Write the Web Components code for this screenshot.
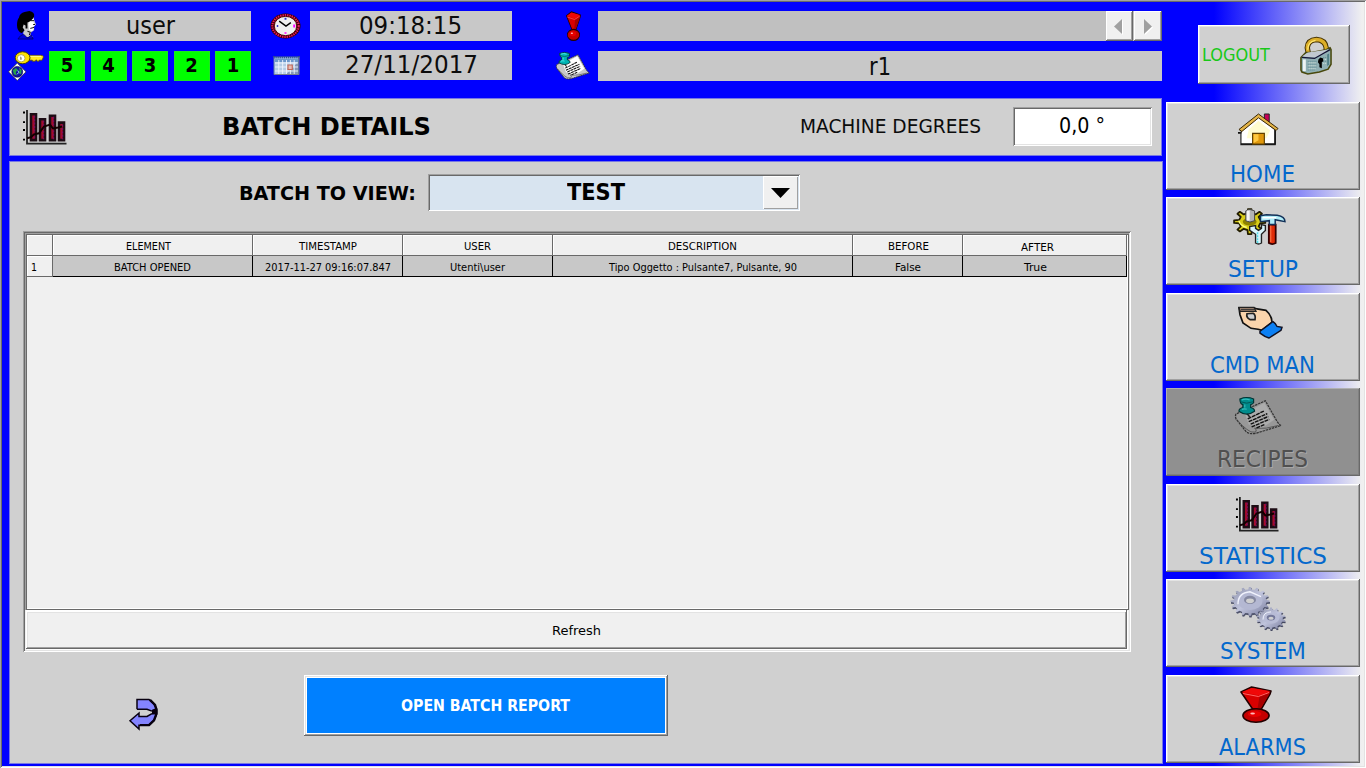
<!DOCTYPE html>
<html lang="en">
<head>
<meta charset="utf-8">
<title>Batch details</title>
<style>
  html, body { margin: 0; height: 100%; }
  body { font-family: "DejaVu Sans Condensed", "DejaVu Sans", sans-serif; color: #000; overflow: hidden; background: #fff; }
</style>
</head>
<body>
<hmi-app></hmi-app>
<script>
const define = (name, html, setup) => {
  const tpl = document.createElement('template');
  tpl.innerHTML = html;
  customElements.define(name, class extends HTMLElement {
    constructor() {
      super();
      this.attachShadow({ mode: 'open' }).append(tpl.content.cloneNode(true));
    }
    connectedCallback() { if (setup) setup.call(this, this.shadowRoot); }
  });
};

/* A label squeezed or stretched to an exact width, given in px by "w". */
define('fit-text', `
  <style>
    :host { display: inline-block; white-space: nowrap; }
    span { display: inline-block; transform-origin: 0 50%; }
  </style><span><slot></slot></span>`, function (root) {
  const w = parseFloat(this.getAttribute('w'));
  const s = root.querySelector('span');
  const natural = s.getBoundingClientRect().width;
  this.style.width = w + 'px';
  if (natural) s.style.transform = `scaleX(${w / natural})`;
});

const gear = (cx, cy, rx, ry, n, k) => {
  let p = [];
  for (let i = 0; i < n; i++) {
    for (const [o, f] of [[-.26, k], [-.14, 1], [.14, 1], [.26, k]]) {
      const a = (i + o) / n * 2 * Math.PI;
      p.push((cx + Math.sin(a) * rx * f).toFixed(1) + ' ' + (cy - Math.cos(a) * ry * f).toFixed(1));
    }
  }
  return 'M' + p.join('L') + 'Z';
};

const note = (paper, hi, pin) => `
  <path d="M7 15L1 18Q0 20 1 23L11 36Q15 40 22 38L47 30Q44 28 42 24L31 4L18 10Z" fill="${paper}" stroke="#333" stroke-width="1.300" stroke-dasharray="2.500 .8"/>
  <path d="M10 17L30 6L40 24L27 33L14 29Z" fill="${hi}"/>
  <path d="M3 25Q8 31 12 34Q16 38 21 37Q23 34 20 33Q32 34 44 30" fill="none" stroke="#555"/>
  <path d="M13 23L30 14.500M14 26L33 17.500M16 28.500L34 20.500M17 31.500L35 23.500M22 32.500L30 29" stroke="#111" stroke-width="1.500" stroke-dasharray="4 .8"/>
  <path d="M12 17L15 21" stroke="#222" stroke-width="1.500"/>
  <path d="M5 2Q12 -1 19 2V6Q18 7.500 16 8V11Q20 12 20 15Q12 21 4 15Q4 12 8 11V8Q5 7 5 2Z" fill="${pin}" stroke="#033" stroke-width="1.200"/>
  <path d="M5.500 5Q12 8 18.500 5" stroke="#055" fill="none"/>
  <path d="M7 3Q11 1.500 15 3M7 13Q10 12 12 13M10 8V11" stroke="${pin === '#008c8c' ? '#3bb' : '#5ee'}" stroke-width="1.200" fill="none"/>`;

const exclaim = `
  <path d="M1 6L12 1L32 5L31 8L22 23H13Z" fill="#d80000" stroke="#200" stroke-width="1.600" stroke-linejoin="round"/>
  <path d="M2 6L12 2L31 5L20 9.500Z" fill="#f00808"/><path d="M3 7.500L19 10.500L30 6.500" fill="none" stroke="#f66" stroke-width="1"/>
  <path d="M20 11L31 7L21 23H18Z" fill="#a80000"/>
  <ellipse cx="16.500" cy="29.500" rx="13.500" ry="6.800" fill="#c40000" stroke="#200" stroke-width="1.600"/>
  <ellipse cx="15" cy="28" rx="7" ry="3" fill="#e80000"/><ellipse cx="13" cy="27.400" rx="2.400" ry="1" fill="#fbb"/>`;

const icons = {
  user: ['0 0 20 30', `
    <path d="M9 2L17 4L18 9L20 14L18 16V20L15 22L14 25L17 27H6L7 20L3 14Z" fill="#ccc"/>
    <path d="M14 8H17.500V12L19 15L17 16L18 18L16 21L13 20L12 14Z" fill="#fff"/>
    <path d="M8 1Q3 2 2 7Q0 9 0 15Q0 21 5 23L8 20L6 17L7 14L9 15V18H11V12Q15 11 18 6Q19 1 13 0Z" fill="#000"/>
    <path d="M14 10H18M17 14H19M14 18L18 17M11 21L14 22L13 25" stroke="#000" fill="none"/>
    <path d="M1 29Q3 25 7 24L11 28L15 25L17 29Z" fill="#0000d8" stroke="#000060" stroke-width=".8"/>`],
  key: ['0 0 36 31', `
    <path d="M18 4.500H34L35.500 6L34 9.500H31V10.500H29L28 9L27 10.500H24V9.500H19Z" fill="#ffe820" stroke="#554400" stroke-width=".8"/>
    <path d="M19 5.500H33" stroke="#ffffa0"/>
    <ellipse cx="14" cy="7" rx="7.600" ry="6.200" fill="#ffe100" stroke="#443c00"/>
    <ellipse cx="12.500" cy="7.500" rx="4" ry="3.800" fill="#fff" stroke="#bbaa40"/><path d="M11.500 5.500L13 7V9H11.500Z" fill="#886"/>
    <path d="M8.500 12.500L17.500 21.500L8.500 30.500L-.5 21.500Z" fill="#fff" stroke="#222" stroke-width=".7"/>
    <circle cx="8.500" cy="21.500" r="5.600" fill="#1010a0" stroke="#000040" stroke-width=".6"/>
    <path d="M4 20L7 17.500L9 19L7 22L8 25L5 24ZM10 17L13 19.500L12.500 24L10 23L11 20Z" fill="#28a048"/>
    <path d="M9 20L10 22L8.500 24" fill="none" stroke="#9cf" stroke-width="1"/>`],
  clock: ['0 0 32 27', `
    <ellipse cx="16" cy="13.500" rx="15.500" ry="13" fill="#300"/>
    <ellipse cx="16" cy="13.500" rx="13.600" ry="11.300" fill="none" stroke="#e8185c" stroke-width="2.200" stroke-dasharray="1.500 .9"/>
    <ellipse cx="16" cy="13.500" rx="11.600" ry="10" fill="#f0f0f0" stroke="#500"/>
    <path d="M9.500 8.500L16.500 13.500L21.500 10" fill="none" stroke="#000" stroke-width="1.500"/>
    <path d="M15 5h2v2h-2ZM7 12.500h1.500v2H7Z" fill="#33c"/><path d="M24 12h2v3h-2ZM15 20h2v1.500h-2Z" fill="#f0f"/>`],
  calendar: ['0 0 28 20', `
    <path d="M1 1H26.500V18.500H1Z" fill="#b4cce6" stroke="#4c6ca4"/><path d="M1 0V1.500H27V0" fill="none" stroke="#2a4a90" stroke-width="2" stroke-dasharray="1 1"/>
    <path d="M2 2.500H26V6H2Z" fill="#6c98cc"/>
    <path d="M14 18L26 6V18Z" fill="#8498b8"/>
    <path d="M2 7H26M2 11H26M2 15H26M6 4V18M10 4V18M14 4V18M18 4V18M22 4V18" stroke="#f0f6ff" stroke-width=".9"/>
    <path d="M15.500 9H20V13.500H15.500Z" fill="#e4bcb4" stroke="#c06858" stroke-width="1.200"/>
    <path d="M1 18.500H27V1" fill="none" stroke="#787c90"/>`],
  exclaim: ['0 0 33 37', exclaim],
  note: ['0 0 48 40', note('#c8c8c8', '#fff', '#00b4b4')],
  noteDim: ['0 0 48 40', note('#989898', '#acacac', '#008c8c')],
  chart: ['0 0 45 37', `
    <path d="M5 1V35.500H44.500" fill="none" stroke="#222" stroke-width="1.800"/>
    <path d="M1 3.500h2M1 13.500h2M1 21.500h2M1 31.500h2" stroke="#000" stroke-width="2"/>
    <path d="M9 5.500H14V32H9ZM18 10.500H23V32H18ZM28 7H33V32H28ZM37 14H42V32H37Z" fill="#a80c2c" stroke="#1c0c14" stroke-width="2.600"/>
    <path d="M12.500 7V31M21.500 12V31M31.500 8V31M40.500 16V31" stroke="#780c60" stroke-width="1.400" stroke-dasharray="2 1.500"/>
    <path d="M5 30L9 29L12 26L17 25L22 18L28 16L31 20L36 19L40 18" fill="none" stroke="#100" stroke-width="2"/>`],
  lock: ['0 0 33 37', `
    <path d="M9 18L7.500 10Q8 2 17 1.500Q26 2 27 10V15" fill="none" stroke="#463200" stroke-width="5.500"/>
    <path d="M9 18L7.500 10Q8 2 17 1.500Q26 2 27 10V15" fill="none" stroke="#dcae28" stroke-width="3.500"/>
    <path d="M8 12Q8 4 16 2.500" fill="none" stroke="#ffe870" stroke-width="1.200"/>
    <path d="M1 20L6 15H12L27 12L31 10L32 12V27L29 32L20 35L8 37L2 35L1 33Z" fill="#90b0b4" stroke="#48480c" stroke-width="1.600"/>
    <path d="M2 19L8 15L27 12L30 11L26 16L15 20Z" fill="#c0c8d0"/>
    <path d="M2 20L15 21L31 12" fill="none" stroke="#113" stroke-width="1.300"/>
    <path d="M3 22H6V34H3Z" fill="#eef4f4"/><path d="M28 17L30 16V27L28 29Z" fill="#508088"/>
    <path d="M8 24H18M8 27H18M8 30H18M8 33H16M24 20H28M24 24H28" stroke="#5c8890" stroke-width="1" stroke-dasharray="1 1"/>
    <path d="M9 25.500H17M9 28.500H17M9 31.500H17M24 22H28M24 26H28" stroke="#d8e8e0" stroke-width="1" stroke-dasharray="1 1"/>
    <path d="M21 20L24 21V24L22.500 25V31L20 30V27L18.500 25L19 22Z" fill="#000"/>`],
  home: ['0 0 43 34', `
    <path d="M28 1H33V11L28 7Z" fill="#c80058" stroke="#222"/>
    <path d="M5 16L22 3L39 17V32.500H4V22Z" fill="#fff" stroke="#333" stroke-width="1.300"/>
    <path d="M12 17L22 8L34 18L30 26H10Z" fill="#fffcd0"/>
    <path d="M1 20.500H4M39 17V32H4" fill="none" stroke="#111" stroke-width="1.600"/>
    <path d="M2 17L22 1L42 16L40 18L22 5L5 19Z" fill="#e4b448" stroke="#332200" stroke-width="1"/>
    <path d="M16 21H28V32H16Z" fill="#e0980c" stroke="#604000" stroke-width="1.200"/><path d="M17 22H22V28L17 31Z" fill="#ffc840"/>`],
  setup: ['0 0 54 38', `
    <path d="${gear(17, 14, 16, 13, 8, .68)}" fill="#d8cc18" stroke="#221c00" stroke-width="1.800" stroke-linejoin="round"/>
    <ellipse cx="17" cy="14" rx="7" ry="4" fill="#8c8000"/><path d="M6 13Q7 18 14 20" fill="none" stroke="#ffff80" stroke-width="1.500"/>
    <path d="M13 3Q17 0 22 3V13Q17 16 13 13Z" fill="#b4b4b4" stroke="#444"/><path d="M15.500 2.500V13" stroke="#f4f4f4" stroke-width="3"/>
    <path d="M17 19L17 23L23 27V36Q26 38 29 36V27L33 23V18L29 17V21L26 23L23 21V18Z" fill="#d8f4fa" stroke="#222" stroke-width="1.400"/>
    <path d="M25 25V36" stroke="#50dce8" stroke-width="1.500" stroke-dasharray="2 1"/>
    <path d="M36.500 17H43.500V36Q40 38 36.500 36Z" fill="#e02c08" stroke="#300" stroke-width="1.800"/><path d="M38.500 18V35" stroke="#ff8050"/>
    <path d="M28 8L34 7L45 7.500Q53 9 53 14L43 12V17H37V13L28 14Z" fill="#b0ecf8" stroke="#113058" stroke-width="1.500"/><path d="M30 10H44" stroke="#fff" stroke-width="1.500"/>`],
  hand: ['0 0 45 34', `
    <path d="M1 2H16L19 3L28 4.500Q34 10 34 17L24 25L20 24L13 23L5 17.500L2 9Z" fill="#fad4ac" stroke="#111" stroke-width="1.700"/>
    <path d="M1 1.500H16L18 5.500H2Z" fill="#a08470" stroke="#222" stroke-width="1.300"/><path d="M3 3.500H17" stroke="#333" stroke-width="1"/>
    <path d="M9 8L15 7.500Q18 9 17 14H12Q8 12 9 8Z" fill="#d0d0d0" stroke="#222" stroke-width="1.700"/>
    <path d="M22 26L35 16Q38 18 39 21L44 22L43 25L31 33Q27 32 22 28Z" fill="#0c80f4" stroke="#112" stroke-width="1.500"/>`],
  gears: ['0 0 56 46', `
    <defs><linearGradient id="g" x1="0" y1="0" x2="1" y2="1"><stop offset="0" stop-color="#9094ac"/><stop offset=".5" stop-color="#c0c4dc"/><stop offset="1" stop-color="#74789a"/></linearGradient></defs>
    <path d="${gear(20, 15.500, 19.500, 15.500, 16, .84)}" fill="#50546c" transform="translate(.5 1)"/>
    <path d="${gear(20, 15, 19.500, 15, 16, .84)}" fill="url(#g)"/>
    <ellipse cx="20" cy="14.500" rx="12.500" ry="9.500" fill="#b4b8d2"/><path d="M8 18Q8 6 20 5L31 10" fill="none" stroke="#f0f2fc" stroke-width="1.400"/>
    <ellipse cx="20" cy="13.500" rx="6" ry="4.300" fill="#8488a0"/><ellipse cx="20" cy="14.500" rx="4" ry="2.600" fill="#d0d0d0"/>
    <path d="${gear(41, 33.500, 14.500, 11.500, 14, .82)}" fill="#444860" transform="translate(.5 1)"/>
    <path d="${gear(41, 33, 14.500, 11.500, 14, .82)}" fill="url(#g)"/>
    <ellipse cx="41" cy="32" rx="8.500" ry="6.400" fill="#b8bcd6"/><path d="M33 34Q33 26 41 26" fill="none" stroke="#f0f2fc"/>
    <ellipse cx="41" cy="32" rx="4.200" ry="3" fill="#74789a"/><ellipse cx="41" cy="32.600" rx="2.600" ry="1.600" fill="#d0d0d0"/>`],
  back: ['0 0 29 34', `
    <path d="M8 1.500H20L25 6.500L27.500 11V17L25 23L20 28H10V32L1 23.500L10 15.500V19H18L23 16V13L18 11.500H8Z" fill="#8484ff"/>
    <path d="M9 12.500H16L23 14L20 18H16Z" fill="#d0d0d0"/>
    <path d="M8 11.500V1.500H20L25 6.500L27.500 11V17L25 23L20 28H10V32L1 23.500L10 15.500V19H18L23 16" fill="none" stroke="#080010" stroke-width="1.500"/>
    <path d="M21 2L26 7L27.500 12V16L25 23L20 28H11" fill="none" stroke="#080010" stroke-width="2.400"/>
    <path d="M8 11.500H18L23 13.500" fill="none" stroke="#080010" stroke-width="1.600"/>
    <path d="M23 12L28 10V17L23 17Z" fill="#080010"/>`]
};

define('hmi-icon', `
  <style>:host { display: block; flex: none; } svg { display: block; overflow: visible; width: 100%; height: 100%; }</style>
  <svg preserveAspectRatio="none"></svg>`, function (root) {
  const [box, art] = icons[this.getAttribute('name')];
  const svg = root.querySelector('svg');
  svg.setAttribute('viewBox', box);
  svg.innerHTML = art;
  this.style.width = this.getAttribute('w') + 'px';
  this.style.height = this.getAttribute('h') + 'px';
});

define('status-field', `
  <style>:host { display: flex; align-items: center; justify-content: center; background: #c8c8c8; font-size: 24px; line-height: 28px; color: #0c0c0c; }</style>
  <slot></slot>`);

define('level-keys', `
  <style>
    :host { display: grid; grid-template-columns: 36px 36px 36px 36px 36px; justify-content: space-between; margin-right: 1px; font: bold 20px/29px "DejaVu Sans Condensed", sans-serif; }
    b { background: #0f0; text-align: center; box-shadow: inset 0 0 0 1px #1ee61e; }
  </style>
  <b>5</b><b>4</b><b>3</b><b>2</b><b>1</b>`);

define('scroll-key', `
  <style>
    :host { display: grid; place-items: center; background: #f0f0f0; box-sizing: border-box; padding: 0 2px 0 0;
      box-shadow: inset -1px -1px #696969, inset 1px 1px #fff, inset -2px -2px #a0a0a0; }
    svg { display: block; overflow: visible; }
  </style>
  <svg width="9" height="15"><path fill="#fff" transform="translate(1 1)"/><path fill="#a0a0a0"/></svg>`, function (root) {
  const d = this.hasAttribute('next') ? 'M1 0V15L9 7.500Z' : 'M8 0V15L0 7.500Z';
  root.querySelectorAll('path').forEach(p => p.setAttribute('d', d));
});

define('status-bar', `
  <style>
    :host { display: grid; height: 87px; box-sizing: content-box; padding: 11px 0 0 9px;
      grid-template-columns: 40px 203px 58px 202px 86px 564px; grid-template-rows: 30px 30px; row-gap: 10px; }
    .ic { display: flex; align-items: flex-start; }
    .message { display: grid; grid-template-columns: 1fr 27px 28px; column-gap: 1px; background: #c0c0c0; }
    status-field.user { margin-right: 1px; }
    status-field.time { padding-right: 1px; }
    status-field.date { margin: -1px 0 1px; }
    status-field.recipe { padding-top: 1px; }
  </style>
  <div class="ic"><hmi-icon name="user" w="19" h="29" style="margin-left:8px"></hmi-icon></div>
  <status-field class="user"><fit-text w="49">user</fit-text></status-field>
  <div class="ic"><hmi-icon name="clock" w="31" h="26" style="margin:2px 0 0 18px"></hmi-icon></div>
  <status-field class="time"><fit-text w="103">09:18:15</fit-text></status-field>
  <div class="ic"><hmi-icon name="exclaim" w="15" h="30" style="margin-left:54px"></hmi-icon></div>
  <div class="message"><span></span><scroll-key></scroll-key><scroll-key next></scroll-key></div>
  <div class="ic"><hmi-icon name="key" w="35" h="30"></hmi-icon></div>
  <level-keys></level-keys>
  <div class="ic"><hmi-icon name="calendar" w="27" h="20" style="margin:5px 0 0 21px"></hmi-icon></div>
  <status-field class="date"><fit-text w="133">27/11/2017</fit-text></status-field>
  <div class="ic"><hmi-icon name="note" w="34" h="28" style="margin:1px 0 0 44px"></hmi-icon></div>
  <status-field class="recipe"><fit-text w="22">r1</fit-text></status-field>`);

define('page-header', `
  <style>
    :host { display: flex; align-items: center; box-sizing: border-box; height: 58px; margin: 0 1px 0 9px; padding-bottom: 2px; background: #d0d0d0; border: 1px solid #7878e4; }
    hmi-icon { margin: 2px 0 0 12px; }
    .title { margin-left: 155px; font-weight: bold; font-size: 25px; }
    .label { margin-left: auto; font-size: 20px; color: #0c0c0c; }
    .value { width: 139px; height: 39px; margin: 0 9px 0 32px; box-sizing: border-box; display: grid; place-items: center; background: #fff; font-size: 21px; padding-right: 2px;
      box-shadow: inset 1px 1px #a0a0a0, inset -1px -1px #fff, inset 2px 2px #696969, inset -2px -2px #e3e3e3; }
  </style>
  <hmi-icon name="chart" w="45" h="36"></hmi-icon>
  <fit-text class="title" w="209">BATCH DETAILS</fit-text>
  <fit-text class="label" w="181">MACHINE DEGREES</fit-text>
  <div class="value"><fit-text w="46">0,0 °</fit-text></div>`);

define('batch-select', `
  <style>
    :host { display: flex; box-sizing: border-box; width: 372px; height: 37px; padding: 2px; background: #d8e4f0;
      box-shadow: inset 1px 1px #a0a0a0, inset -1px -1px #fff, inset 2px 2px #696969; }
    .v { flex: 1; display: grid; place-items: center; font-weight: bold; font-size: 23px; padding: 0 2px 2px 0; line-height: 28px; }
    .b { width: 35px; display: grid; place-items: center; background: #f0f0f0; box-shadow: inset 1px 1px #fff, inset -1px -1px #a0a0a0; }
  </style>
  <div class="v"><fit-text w="58">TEST</fit-text></div>
  <div class="b"><svg width="19" height="10"><path d="M0 0H19L9.500 10Z"/></svg></div>`);

define('log-table', `
  <style>
    :host { display: flex; flex-direction: column; box-sizing: border-box; width: 1108px; height: 421px; padding: 2px; background: #f0f0f0; font-size: 11px; line-height: 13px;
      box-shadow: inset 1px 1px #a0a0a0, inset -1px -1px #fff, inset 2px 2px #696969, inset -2px -2px #e3e3e3; }
    .view { height: 377px; width: 1104px; padding: 2px; box-sizing: border-box; box-shadow: inset 1px 1px #a0a0a0, inset -1px -1px #696969, inset 2px 2px #696969, inset -2px -2px #fff; }
    .grid { display: grid; grid-template-columns: 26px 200px 150px 150px 300px 110px 164px; grid-template-rows: 21px 21px; }
    .grid > div { display: grid; place-items: center; box-sizing: border-box; border-right: 1px solid #696969; border-bottom: 1px solid #696969; }
    .h { box-shadow: inset 1px 1px #fff; padding-top: 2px; }
    .grid > .c { background: #c8c8c8; border-color: #000; padding-top: 2px; }
    .grid > .n { justify-items: start; padding: 2px 0 0 4px; box-shadow: inset 1px 1px #fff; }
    .refresh { flex: 1; margin: 0 2px 1px 1px; display: grid; place-items: center; font-size: 13px; padding: 2px 1px 0 0; box-sizing: border-box;
      box-shadow: inset -1px -1px #696969, inset 1px 2px #fff, inset -2px -2px #a0a0a0, inset 2px 3px #e3e3e3, 1px 1px #fff; }
  </style>
  <div class="view"><div class="grid">
    <div class="h"></div>
    <div class="h" style="padding-right:8px"><fit-text w="45">ELEMENT</fit-text></div>
    <div class="h"><fit-text w="58">TIMESTAMP</fit-text></div>
    <div class="h"><fit-text w="27">USER</fit-text></div>
    <div class="h"><fit-text w="69">DESCRIPTION</fit-text></div>
    <div class="h" style="padding-left:1px"><fit-text w="41">BEFORE</fit-text></div>
    <div class="h" style="padding:4px 15px 0 0"><fit-text w="33">AFTER</fit-text></div>
    <div class="n"><fit-text w="6">1</fit-text></div>
    <div class="c" style="padding-right:1px"><fit-text w="77">BATCH OPENED</fit-text></div>
    <div class="c" style="padding-left:1px"><fit-text w="126">2017-11-27 09:16:07.847</fit-text></div>
    <div class="c" style="padding-right:1px"><fit-text w="55">Utenti\\user</fit-text></div>
    <div class="c"><fit-text w="188">Tipo Oggetto : Pulsante7, Pulsante, 90</fit-text></div>
    <div class="c"><fit-text w="26">False</fit-text></div>
    <div class="c" style="padding-right:18px"><fit-text w="23">True</fit-text></div>
  </div></div>
  <div class="refresh"><fit-text w="49">Refresh</fit-text></div>`);

define('batch-panel', `
  <style>
    :host { display: block; box-sizing: border-box; height: 603px; margin: 5px 0 0 9px; background: #d0d0d0; border: 1px solid #7878e4; }
    .pick { display: flex; align-items: center; height: 37px; margin: 12px 0 20px 229px; }
    .pick fit-text { font-weight: bold; font-size: 20px; margin-right: 12px; }
    log-table { margin-left: 13px; }
    .foot { display: flex; align-items: flex-start; padding: 23px 0 0 119px; }
    .foot hmi-icon { margin: 23px 146px 0 0; }
    .report { width: 364px; height: 61px; display: grid; place-items: center; box-sizing: border-box; padding-right: 1px; background: #0080ff; color: #fff; font-weight: bold; font-size: 15px;
      box-shadow: inset -1px -1px #696969, inset 1px 1px #fff, inset -2px -2px #a0a0a0, inset 2px 2px #e3e3e3, inset 0 0 0 3px #fff; }
  </style>
  <div class="pick"><fit-text w="177">BATCH TO VIEW:</fit-text><batch-select></batch-select></div>
  <log-table></log-table>
  <div class="foot"><hmi-icon name="back" w="29" h="33"></hmi-icon><div class="report"><fit-text w="169">OPEN BATCH REPORT</fit-text></div></div>`);

define('nav-button', `
  <style>
    :host { display: flex; flex-direction: column; align-items: center; box-sizing: border-box; width: 194px; height: 88px; padding-right: 1px; background: #d0d0d0; color: #0468cc; font-size: 23.500px; line-height: 28px;
      box-shadow: inset -1px -1px #696969, inset 1px 1px #fff, inset -2px -2px #a0a0a0, inset 2px 2px #e3e3e3; }
    :host([disabled]) { background: #909090; color: #505050; text-shadow: 1px 1px #a8a8a8;
      box-shadow: inset -1px -1px #696969, inset 1px 1px #b0b0b0, inset -2px -2px #808080; }
    .ic { height: 58px; box-sizing: border-box; }
    :host([disabled]) .ic { height: 57px; }
  </style>
  <div class="ic"><slot name="icon"></slot></div><slot></slot>`);

define('side-nav', `
  <style>
    :host { display: block; width: 194px; padding: 25px 0 0 3px; }
    .logout { display: flex; align-items: center; box-sizing: border-box; width: 152px; height: 59px; margin: 0 0 18px 32px; padding-left: 4px; background: #d0d0d0; color: #18c818; font-size: 17.500px;
      box-shadow: inset -1px -1px #696969, inset 1px 1px #fff, inset -2px -2px #a0a0a0, inset 2px 2px #e3e3e3; }
    .logout hmi-icon { margin: 2px 0 0 30px; }
    nav-button { margin-bottom: 8px; }
    nav-button:nth-of-type(odd) { margin-bottom: 7px; }
  </style>
  <div class="logout"><fit-text w="68">LOGOUT</fit-text><hmi-icon name="lock" w="32" h="36"></hmi-icon></div>
  <nav-button><hmi-icon slot="icon" name="home" w="42" h="33" style="margin:11px 9px 0 0"></hmi-icon><fit-text w="65">HOME</fit-text></nav-button>
  <nav-button><hmi-icon slot="icon" name="setup" w="53" h="37" style="margin:11px 6px 0 0"></hmi-icon><fit-text w="70">SETUP</fit-text></nav-button>
  <nav-button><hmi-icon slot="icon" name="hand" w="45" h="33" style="margin:13px 4px 0 0"></hmi-icon><fit-text w="105">CMD MAN</fit-text></nav-button>
  <nav-button disabled><hmi-icon slot="icon" name="noteDim" w="47" h="38" style="margin:9px 8px 0 0"></hmi-icon><fit-text w="91">RECIPES</fit-text></nav-button>
  <nav-button><hmi-icon slot="icon" name="chart" w="44" h="36" style="margin:12px 11px 0 0"></hmi-icon><fit-text w="128">STATISTICS</fit-text></nav-button>
  <nav-button><hmi-icon slot="icon" name="gears" w="56" h="44" style="margin:8px 9px 0 0"></hmi-icon><fit-text w="86">SYSTEM</fit-text></nav-button>
  <nav-button><hmi-icon slot="icon" name="exclaim" w="32" h="37" style="margin:11px 13px 0 0"></hmi-icon><fit-text w="87">ALARMS</fit-text></nav-button>`);

define('hmi-app', `
  <style>
    :host { display: grid; grid-template-columns: 1163px 1fr; width: 1366px; height: 768px; position: relative; overflow: hidden;
      background: linear-gradient(90deg, #00f 1214px, #f0f0f0 1362px); }
    :host::after { content: ""; position: absolute; inset: 0; pointer-events: none;
      box-shadow: inset 1px 1px #a0a0a0, inset -1px -1px #fff, inset 2px 2px #696969, inset -2px -2px #e3e3e3; }
  </style>
  <main><status-bar></status-bar><page-header></page-header><batch-panel></batch-panel></main>
  <side-nav></side-nav>`);
</script>
</body>
</html>
